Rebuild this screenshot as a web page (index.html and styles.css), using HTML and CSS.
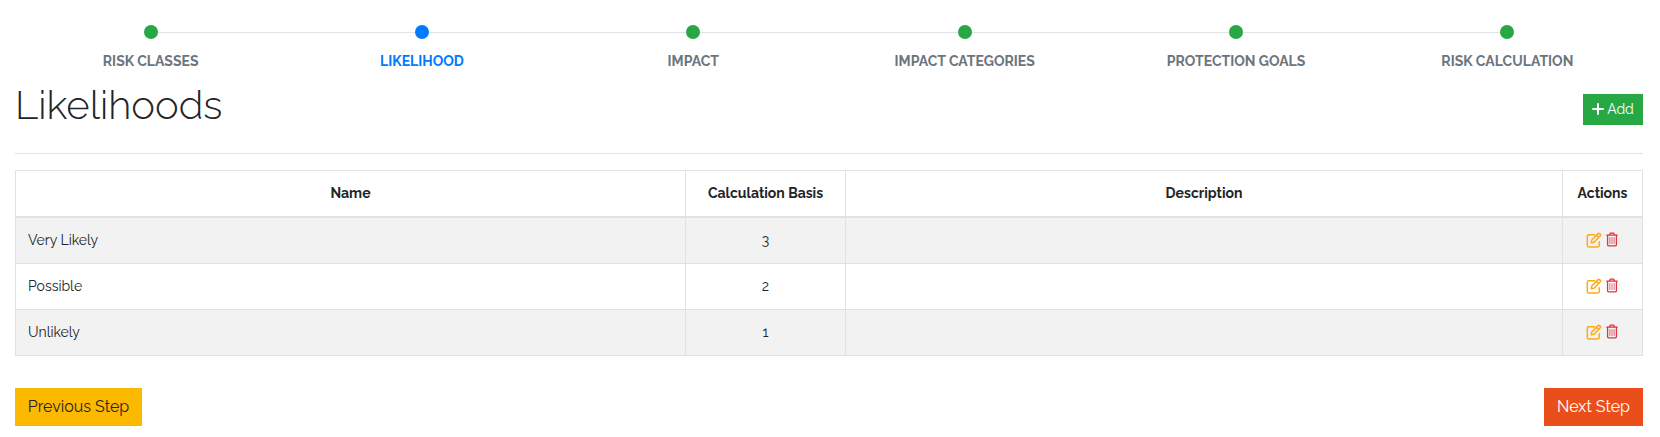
FILE: index.html
```html
<!DOCTYPE html>
<html lang="en">
<head>
<meta charset="utf-8">
<title>Likelihoods</title>
<link rel="stylesheet" href="styles.css">
</head>
<body>
<svg class="sprite" aria-hidden="true">
  <symbol id="edit" viewBox="0 0 16 16"><g fill="none" stroke="currentColor" stroke-width="1.5" stroke-linejoin="round" stroke-linecap="round"><path d="M8.500 2.800H2.700Q1.300 2.800 1.300 4.200V13.500Q1.300 14.900 2.700 14.900H11.900Q13.300 14.900 13.300 13.500V9.800"/><path d="M5.300 10.700L5.700 8L12.100 1.600Q12.800 .9 13.500 1.600L14.300 2.400Q15 3.100 14.300 3.800L8 10.200ZM10.500 3.300L12.700 5.500"/></g></symbol>
  <symbol id="trash" viewBox="0 0 13 16"><g fill="none" stroke="currentColor"><path stroke-width="1.400" d="M.3 3.200H12.700M3.700 3L4.700 1.200H8.300L9.300 3M1.700 3.500V13.700Q1.700 14.900 2.900 14.900H10.100Q11.300 14.900 11.300 13.700V3.500"/><path stroke-width=".8" d="M4.200 5.500V12.800M6.500 5.500V12.800M8.800 5.500V12.800"/></g></symbol>
</svg>
<main class="page">
  <ol class="steps">
    <li class="step"><span class="dot"></span><span class="label">RISK CLASSES</span></li>
    <li class="step active"><span class="dot"></span><span class="label">LIKELIHOOD</span></li>
    <li class="step"><span class="dot"></span><span class="label">IMPACT</span></li>
    <li class="step"><span class="dot"></span><span class="label">IMPACT CATEGORIES</span></li>
    <li class="step"><span class="dot"></span><span class="label">PROTECTION GOALS</span></li>
    <li class="step"><span class="dot"></span><span class="label">RISK CALCULATION</span></li>
  </ol>
  <header class="heading">
    <h1 class="title">Likelihoods</h1>
    <button class="btn add"><svg class="plus" viewBox="0 0 12 12"><path d="M6 1V11M1 6H11" stroke="currentColor" stroke-width="2" stroke-linecap="round"/></svg><span>Add</span></button>
  </header>
  <table class="table">
    <colgroup><col class="col-name"><col class="col-basis"><col class="col-desc"><col class="col-actions"></colgroup>
    <thead><tr><th>Name</th><th>Calculation Basis</th><th>Description</th><th>Actions</th></tr></thead>
    <tbody>
      <tr><td>Very Likely</td><td class="num">3</td><td></td><td><div class="actions"><svg class="edit"><use href="#edit"/></svg><svg class="trash"><use href="#trash"/></svg></div></td></tr>
      <tr><td>Possible</td><td class="num">2</td><td></td><td><div class="actions"><svg class="edit"><use href="#edit"/></svg><svg class="trash"><use href="#trash"/></svg></div></td></tr>
      <tr><td>Unlikely</td><td class="num">1</td><td></td><td><div class="actions"><svg class="edit"><use href="#edit"/></svg><svg class="trash"><use href="#trash"/></svg></div></td></tr>
    </tbody>
  </table>
  <footer class="nav"><button class="btn prev">Previous Step</button><button class="btn next">Next Step</button></footer>
</main>
</body>
</html>
```
FILE: styles.css
```css
* { box-sizing: border-box; }
body { margin: 0; background: #fff; color: #212529; font-family: Raleway, Lato, sans-serif; font-size: 14px; line-height: 21px; font-weight: 400; }
.sprite { display: none; }
.page { width: 1628px; margin-left: 15px; padding-top: 25px; }
.steps { display: grid; grid-template-columns: repeat(6, 1fr); list-style: none; margin: 0; padding: 0; }
.step { display: grid; grid-template-columns: 1fr 14px 1fr; align-items: center; row-gap: 12px; color: #6c757d; }
.step::before, .step::after { content: ""; height: 1px; background: #e2e3e4; grid-row: 1; margin-top: 1px; }
.step::before { grid-column: 1; }
.step::after { grid-column: 3; }
.step:first-child::before, .step:last-child::after { visibility: hidden; }
.dot { grid-column: 2; grid-row: 1; height: 14px; border-radius: 50%; background: #28a745; }
.label { grid-column: 1 / -1; grid-row: 2; text-align: center; font-weight: 700; }
.active { color: #007bff; }
.active .dot { background: #007bff; }
.heading { display: flex; justify-content: space-between; height: 82px; padding-top: 9px; border-bottom: 1px solid #e2e3e4; }
.title { margin: 0; font-size: 40px; line-height: 48px; font-weight: 300; }
.btn { border: 0; padding: 0; font: inherit; display: flex; align-items: center; justify-content: center; color: #fff; }
.add { width: 60px; height: 31px; margin-top: 13px; gap: 3px; background: #28a745; }
.plus { width: 12px; height: 12px; margin-top: -1px; }
.table { width: 1628px; margin-top: 16px; border-collapse: separate; border-spacing: 0; table-layout: fixed; border-top: 1px solid #dee2e6; border-left: 1px solid #dee2e6; }
.col-name { width: 670px; }
.col-basis { width: 160px; }
.col-desc { width: 717px; }
.col-actions { width: 80px; }
th, td { border: 0 solid #dee2e6; border-width: 0 1px 1px 0; padding: 0 12px; height: 46px; }
th { height: 47px; border-bottom-width: 2px; font-weight: 700; }
tbody tr:nth-child(odd) { background: #f2f2f2; }
.num { text-align: center; font-variant-numeric: oldstyle-nums; }
.actions { display: flex; justify-content: center; align-items: center; gap: 4px; padding: 0 2px 2px 0; }
.edit { width: 16px; height: 16px; color: #ffa914; }
.trash { width: 12px; height: 15px; color: #dc3545; }
.nav { display: flex; justify-content: space-between; margin-top: 32px; }
.prev, .next { height: 38px; padding-bottom: 1px; font-size: 16px; }
.prev { width: 127px; background: #fcb900; color: #212529; }
.next { width: 99px; background: #e94e1b; }
```
